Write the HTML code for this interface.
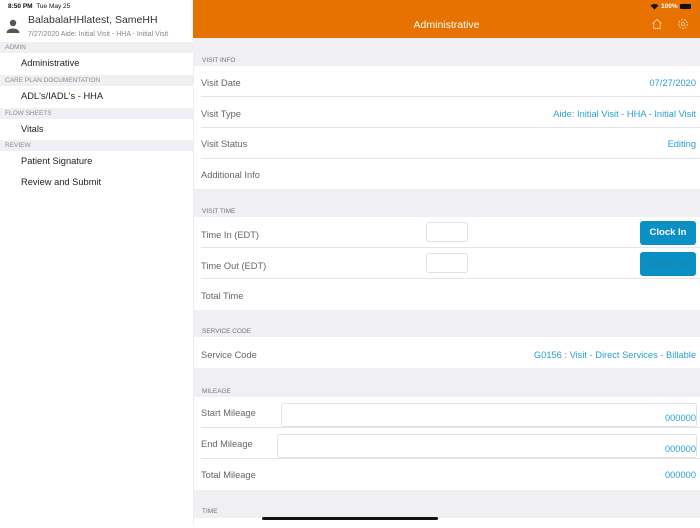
<!DOCTYPE html>
<html><head><meta charset="utf-8"><style>
*{margin:0;padding:0;box-sizing:border-box}
body{width:700px;height:525px;overflow:hidden;font-family:"Liberation Sans",sans-serif;background:#fff;position:relative}
.a{position:absolute;white-space:nowrap}
#side{position:absolute;left:0;top:0;width:193px;height:525px;background:#fff}
.sh{position:absolute;left:0;width:193px;height:11px;background:#efeff4;font-size:6.5px;color:#8a8a8f;padding-left:5px;line-height:11px}
.si{position:absolute;left:21px;font-size:9.3px;color:#222}
#main{position:absolute;left:193px;top:38px;width:507px;height:487px;background:#efeff4;border-left:1px solid #eee}
.row{position:absolute;left:0;width:507px;background:#fff}
.lb{position:absolute;left:7px;font-size:9.3px;color:#666;margin-top:2px}
.v{position:absolute;right:5px;font-size:9.3px;color:#2b9fd5;margin-top:2px}
.sep{position:absolute;left:7px;right:0;height:1px;background:#e4e4e8}
.sec{position:absolute;left:8px;font-size:6.5px;color:#777;margin-top:1px}
.box{position:absolute;background:#fff;border:1px solid #e2e2e6;border-radius:3px}
.btn{position:absolute;left:446px;width:56px;height:24px;background:#0a90c3;border-radius:3px;color:#fff;font-weight:bold;font-size:9.5px;text-align:center;line-height:24px}
</style></head><body>
<div id="side">
<div class="a" style="left:8px;top:3px;font-size:6.5px;font-weight:bold;color:#111">8:50 PM&nbsp;&nbsp;<span style="font-weight:normal">Tue May 25</span></div>
<svg class="a" style="left:6px;top:19px" width="14" height="14" viewBox="0 0 14 14"><circle cx="7" cy="4" r="3.2" fill="#555"/><path d="M0.5 14 C0.5 8 13.5 8 13.5 14Z" fill="#555"/></svg>
<div class="a" style="left:28px;top:14px;font-size:10.5px;color:#333">BalabalaHHlatest, SameHH</div>
<div class="a" style="left:28px;top:31px;font-size:7px;color:#888">7/27/2020 Aide: Initial Visit - HHA - Initial Visit</div>
<div class="sh" style="top:42px">ADMIN</div>
<div class="si" style="top:58px">Administrative</div>
<div class="sh" style="top:75px">CARE PLAN DOCUMENTATION</div>
<div class="si" style="top:91px">ADL's/IADL's - HHA</div>
<div class="sh" style="top:108px">FLOW SHEETS</div>
<div class="si" style="top:124px">Vitals</div>
<div class="sh" style="top:140px">REVIEW</div>
<div class="si" style="top:156px">Patient Signature</div>
<div class="si" style="top:177px">Review and Submit</div>
</div>
<div class="a" style="left:193px;top:0;width:507px;height:38px;background:#e87200"></div>
<div class="a" style="left:193px;top:19px;width:507px;text-align:center;font-size:10.5px;color:#fff">Administrative</div>
<div class="a" style="left:661px;top:3px;font-size:6.5px;color:#fff;font-weight:bold">100%</div>
<div class="a" style="left:680px;top:4px;width:11px;height:5px;background:#111;border-radius:1px"></div>
<svg class="a" style="left:650px;top:3px" width="9" height="7" viewBox="0 0 9 7"><path d="M4.5 6.5 L0.5 2.5 A6 6 0 0 1 8.5 2.5Z" fill="#111"/></svg>
<svg class="a" style="left:651px;top:18px" width="12" height="12" viewBox="0 0 12 12"><path d="M1.5 5.5 L6 1.5 L10.5 5.5 M2.8 4.5 V10.5 H9.2 V4.5" fill="none" stroke="#f7c89a" stroke-width="0.9"/></svg>
<svg class="a" style="left:677px;top:18px" width="12" height="12" viewBox="0 0 12 12"><circle cx="6" cy="6" r="4.3" fill="none" stroke="#f7c89a" stroke-width="1" stroke-dasharray="2 1"/><circle cx="6" cy="6" r="1.7" fill="none" stroke="#f7c89a" stroke-width="0.9"/></svg>
<div id="main">
<div class="sec" style="top:18px">VISIT INFO</div>
<div class="row" style="top:28px;height:123px">
<div class="lb" style="top:10px">Visit Date</div><div class="v" style="top:10px">07/27/2020</div>
<div class="sep" style="top:30px"></div>
<div class="lb" style="top:41px">Visit Type</div><div class="v" style="top:41px">Aide: Initial Visit - HHA - Initial Visit</div>
<div class="sep" style="top:61px"></div>
<div class="lb" style="top:71px">Visit Status</div><div class="v" style="top:71px">Editing</div>
<div class="sep" style="top:92px"></div>
<div class="lb" style="top:102px">Additional Info</div>
</div>
<div class="sec" style="top:169px">VISIT TIME</div>
<div class="row" style="top:179px;height:93px">
<div class="lb" style="top:11px">Time In (EDT)</div>
<div class="box" style="left:232px;top:5px;width:42px;height:20px"></div>
<div class="btn" style="top:4px">Clock In</div>
<div class="sep" style="top:30px"></div>
<div class="lb" style="top:42px">Time Out (EDT)</div>
<div class="box" style="left:232px;top:36px;width:42px;height:20px"></div>
<div class="btn" style="top:35px;color:#1a86b0">Clock Out</div>
<div class="sep" style="top:61px"></div>
<div class="lb" style="top:72px">Total Time</div>
</div>
<div class="sec" style="top:289px">SERVICE CODE</div>
<div class="row" style="top:299px;height:31px">
<div class="lb" style="top:11px">Service Code</div><div class="v" style="top:11px">G0156 : Visit - Direct Services - Billable</div>
</div>
<div class="sec" style="top:349px">MILEAGE</div>
<div class="row" style="top:359px;height:93px">
<div class="lb" style="top:9px">Start Mileage</div>
<div class="box" style="left:87px;top:6px;width:416px;height:24px"></div>
<div class="v" style="top:14px">000000</div>
<div class="sep" style="top:30px"></div>
<div class="lb" style="top:40px">End Mileage</div>
<div class="box" style="left:83px;top:37px;width:420px;height:24px"></div>
<div class="v" style="top:45px">000000</div>
<div class="sep" style="top:61px"></div>
<div class="lb" style="top:71px">Total Mileage</div><div class="v" style="top:71px">000000</div>
</div>
<div class="sec" style="top:469px">TIME</div>
<div class="row" style="top:480px;height:10px"></div>
</div>
<div class="a" style="left:262px;top:517px;width:176px;height:3px;background:#111;border-radius:2px"></div>
</body></html>
